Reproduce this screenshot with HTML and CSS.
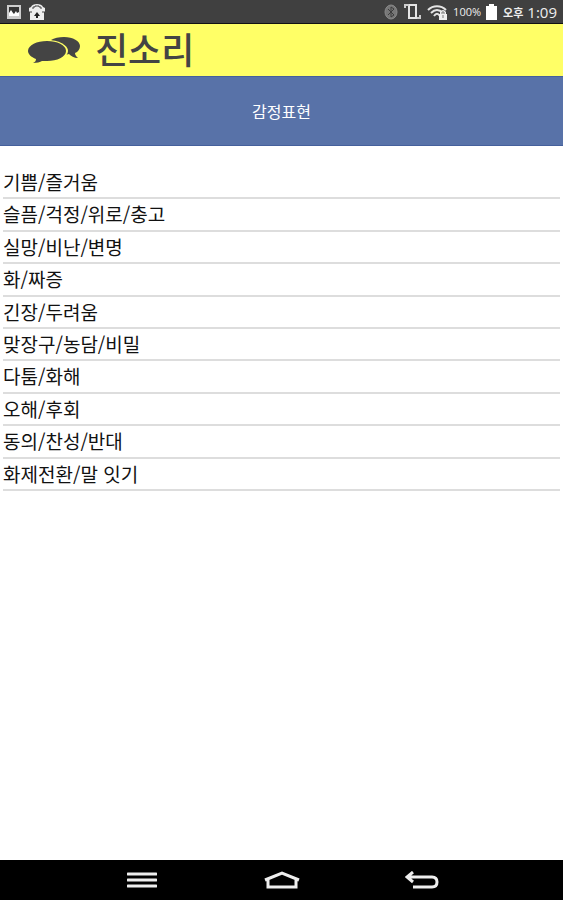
FILE: index.html
```html
<!DOCTYPE html>
<html lang="ko">

<head>
    <meta charset="utf-8">
    <meta name="viewport" content="width=device-width, initial-scale=1">
    <title>진소리</title>
    <link rel="stylesheet" href="styles.css">
</head>

<body>
    <div class="status">
        <div class="status-left">
            <svg width="16" height="16" viewBox="0 0 16 16">
                <rect x="1" y="1" width="14" height="14" fill="#ccc"/>
                <rect x="3" y="3" width="10" height="9" fill="#333"/>
                <path d="M3 12V9l2-3 2 3 1 1 2-3 1 2 2-1v4z" fill="#fff"/>
            </svg>
            <svg width="18" height="18" viewBox="0 0 18 18">
                <path d="M3 4c1-4 11-4 12 0l2 1v4H1V5zM2 9h14v8H2z" fill="#eee"/>
                <path d="M5 6V4h2V3h4v1h2v2M1 9h3M14 9h3" fill="none" stroke="#444"/>
                <path d="M9 9l-3 4h2v2h2v-2h2z" fill="#222"/>
            </svg>
        </div>
        <div class="status-right">
            <svg width="15" height="16" viewBox="0 0 15 16">
                <ellipse cx="7" cy="8" rx="6" ry="7" fill="#777" stroke="#8a8a8a"/>
                <path d="M4 5l6 6-3 2V3l3 2-6 6" fill="none" stroke="#3c3c3c"/>
            </svg>
            <svg width="20" height="18" viewBox="0 0 20 18">
                <path d="M6 2h7v13H6z" fill="none" stroke="#e4e4e4" stroke-width="2"/>
                <path d="M2 5V2h4M14 15h3v-3" fill="none" stroke="#ccc" stroke-width="2"/>
            </svg>
            <svg width="22" height="18" viewBox="0 0 22 18">
                <path d="M1 7c5-5 13-5 18 0M4 10c4-4 8-4 12 0M7 13c2-3 4-3 6 0" fill="none" stroke="#e4e4e4" stroke-width="2"/>
                <path d="M13 11V9q3-4 6 0v2h1v6h-8v-6z" fill="#eee"/>
                <path d="M15 11V9h2v2M16 12v3" fill="none" stroke="#777"/>
            </svg>
            <span class="percent">100%</span>
            <svg width="14" height="18" viewBox="0 0 14 18">
                <path d="M4 1h5v2h3v14H1V3h3z" fill="#fff"/>
            </svg>
            <span class="ampm">오후</span>
            <span class="clock">1:09</span>
        </div>
    </div>

    <header class="brand">
        <svg width="54" height="28" viewBox="0 0 54 28">
            <path d="M37 1c9 0 16 4 16 9 0 3-2 6-5 7 0 2 1 3 3 5-4 0-7-2-9-4l-4 1-14-15c3-2 8-3 13-3z" fill="#444"/>
            <ellipse cx="20" cy="15" rx="21" ry="11" fill="#ffff66"/>
            <path d="M20 5c10 0 19 4 19 10s-9 10-19 10h-5c-2 1-5 2-9 2 2-1 3-2 3-4-5-2-8-5-8-8C1 9 10 5 20 5z" fill="#444"/>
        </svg>
        <h1>진소리</h1>
    </header>

    <h2 class="title">감정표현</h2>

    <ul class="topics">
        <li><a href="#">기쁨/즐거움</a></li>
        <li><a href="#">슬픔/걱정/위로/충고</a></li>
        <li><a href="#">실망/비난/변명</a></li>
        <li><a href="#">화/짜증</a></li>
        <li><a href="#">긴장/두려움</a></li>
        <li><a href="#">맞장구/농담/비밀</a></li>
        <li><a href="#">다툼/화해</a></li>
        <li><a href="#">오해/후회</a></li>
        <li><a href="#">동의/찬성/반대</a></li>
        <li><a href="#">화제전환/말 잇기</a></li>
    </ul>

    <nav class="keys">
        <button type="button" aria-label="메뉴">
            <svg width="30" height="18" viewBox="0 0 30 18">
                <path d="M1 3h28M1 9h28M1 15h28" stroke="#eee" stroke-width="3" stroke-linecap="round"/>
            </svg>
        </button>
        <button type="button" aria-label="홈">
            <svg width="36" height="18" viewBox="0 0 36 18">
                <path d="M1 9l17-7 17 7M4 8v8h28V8" fill="none" stroke="#eee" stroke-width="3"/>
            </svg>
        </button>
        <button type="button" aria-label="뒤로">
            <svg width="34" height="18" viewBox="0 0 34 18">
                <path d="M8 1L2 6l6 5M2 6h25q5 0 5 5t-5 5H8" fill="none" stroke="#eee" stroke-width="3"/>
            </svg>
        </button>
    </nav>
</body>

</html>
```

FILE: styles.css
```css
body {
    margin: 0;
    min-height: 100vh;
    display: flex;
    flex-direction: column;
    background: #fff;
    color: #111;
    font-family: "Noto Sans CJK KR", sans-serif;
}

h1, h2 {
    margin: 0;
    font-weight: normal;
}

svg {
    display: block;
}

.status {
    display: flex;
    justify-content: space-between;
    align-items: center;
    height: 24px;
    padding: 0 6px;
    box-sizing: border-box;
    border-bottom: 1px solid #111;
    background: #404040;
    color: #eee;
}

.status-left, .status-right {
    display: flex;
    align-items: center;
    gap: 6px;
}

.status-right {
    gap: 4px;
}

.percent {
    font: 11px "Open Sans", sans-serif;
}

.ampm {
    font-size: 11px;
    font-weight: bold;
}

.clock {
    font: 15px "Open Sans", sans-serif;
}

.brand {
    display: flex;
    align-items: center;
    gap: 14px;
    height: 52px;
    padding-left: 27px;
    background: #ffff66;
}

.brand h1 {
    padding-bottom: 4px;
    color: #444;
    font-size: 36px;
    font-weight: 500;
    line-height: 44px;
}

.title {
    padding: 22px 0;
    border-top: 1px solid #45609c;
    border-bottom: 1px solid #45609c;
    background: #5872a8;
    color: #fff;
    font-size: 16px;
    line-height: 24px;
    text-align: center;
}

.topics {
    display: grid;
    grid-auto-rows: 1fr;
    min-height: 324px;
    margin: 21px 3px 0;
    padding: 0;
    list-style: none;
}

.topics li {
    border-bottom: 2px solid #ddd;
}

.topics a {
    display: block;
    color: inherit;
    font-size: 19px;
    line-height: 30px;
    text-decoration: none;
}

.keys {
    display: flex;
    justify-content: center;
    gap: 70px;
    height: 40px;
    margin-top: auto;
    background: #000;
}

.keys button {
    display: flex;
    justify-content: center;
    align-items: center;
    width: 70px;
    padding: 0;
    border: 0;
    background: none;
}
```
